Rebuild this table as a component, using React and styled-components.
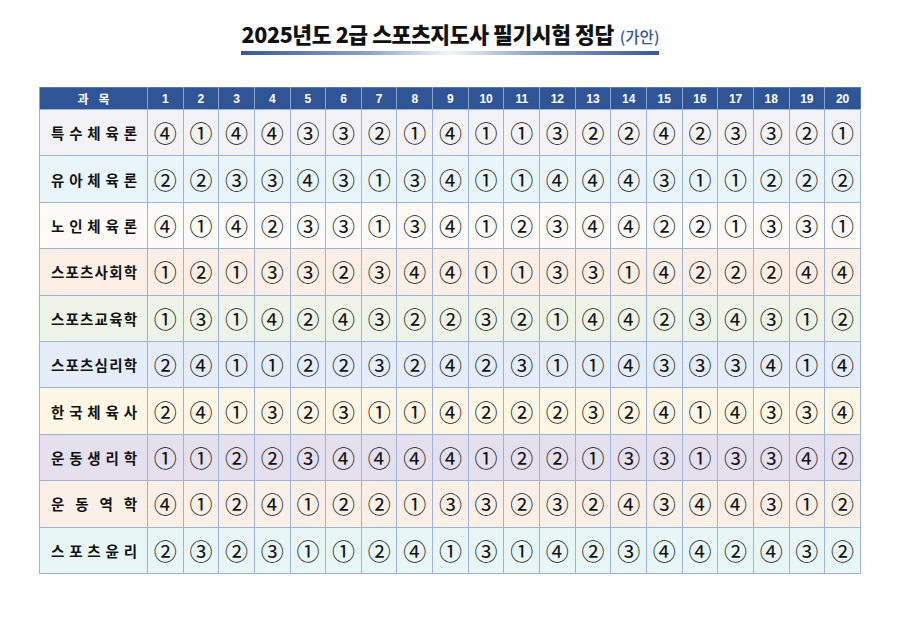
import React from 'react';
import styled, { createGlobalStyle } from 'styled-components';

const GlobalStyle = createGlobalStyle`
  html, body {
    margin: 0;
    padding: 0;
    background: #fff;
  }
  body {
    font-family: "Noto Sans CJK KR", "Noto Sans", sans-serif;
  }
`;

const Page = styled.div`
  width: 900px;
  height: 622px;
  display: flex;
  flex-direction: column;
  align-items: center;
  padding-top: 21px;
  box-sizing: border-box;
`;

const TitleBlock = styled.div`
  display: flex;
  flex-direction: column;
  align-items: stretch;
  margin-bottom: 32px;
`;

const Title = styled.h1`
  margin: 0;
  padding: 0 0 2px 1px;
  font-size: 21.5px;
  font-weight: 800;
  line-height: 26px;
  color: #111;
  letter-spacing: -0.4px;
  white-space: nowrap;
`;

const Draft = styled.span`
  font-size: 15.5px;
  font-weight: 500;
  color: #35559a;
  margin-left: 6px;
  letter-spacing: 0;
`;

const Underline = styled.div`
  height: 4px;
  background: linear-gradient(90deg, #3a5896 0%, #8ea2c6 30%, #f2f5fa 50%, #8ea2c6 70%, #3a5896 100%);
`;

const Table = styled.table`
  border-collapse: collapse;
  table-layout: fixed;
  width: 822px;
  border: 1.5px solid #5577ad;
`;

const HeadCell = styled.th`
  background: #2f5597;
  color: #fff;
  font-size: 12px;
  font-weight: 700;
  height: 21px;
  padding: 0;
  border-left: 1px solid #8aa3cf;
  font-family: "Liberation Sans", "Noto Sans CJK KR", sans-serif;
  letter-spacing: ${(p) => (p.$wide ? '10px' : '0')};
  text-indent: ${(p) => (p.$wide ? '10px' : '0')};
`;

const Row = styled.tr`
  background: ${(p) => p.$bg};
`;

const NameCell = styled.td`
  height: 45.4px;
  padding: 0 10px 0 11px;
  border: 1px solid #9fb3d6;
`;

const Name = styled.div`
  display: flex;
  justify-content: space-between;
  font-size: 14.5px;
  font-weight: 700;
  color: #111;
`;

const AnswerCell = styled.td`
  padding: 0;
  text-align: center;
  border: 1px solid #9fb3d6;
  font-family: "Noto Sans CJK KR", serif;
  font-size: 23px;
  font-weight: 400;
  line-height: 1;
  color: #111;
`;

const COLS = Array.from({ length: 20 }, (_, i) => i + 1);
const SYM = ['', '①', '②', '③', '④'];

const subjects = [
  { name: '특수체육론', bg: '#f3f3f5', a: '41443321411322423321' },
  { name: '유아체육론', bg: '#e9f5f8', a: '22334313411444311222' },
  { name: '노인체육론', bg: '#fcfbf8', a: '41423313412344221331' },
  { name: '스포츠사회학', bg: '#fcefe6', a: '12133234411331422244' },
  { name: '스포츠교육학', bg: '#eef5e8', a: '13142432232144234312' },
  { name: '스포츠심리학', bg: '#e5edf8', a: '24112232423114333414' },
  { name: '한국체육사', bg: '#fef7e6', a: '24132311422232414334' },
  { name: '운동생리학', bg: '#e5e0ee', a: '11223444412213313342' },
  { name: '운동역학', bg: '#faf0e8', a: '41241221332324344312' },
  { name: '스포츠윤리', bg: '#e9f6f6', a: '23231124131423442432' },
];

export default function App() {
  return (
    <>
      <GlobalStyle />
      <Page>
        <TitleBlock>
          <Title>
            2025년도 2급 스포츠지도사 필기시험 정답<Draft>(가안)</Draft>
          </Title>
          <Underline />
        </TitleBlock>
        <Table>
          <colgroup>
            <col style={{ width: '108px' }} />
            {COLS.map((c) => (
              <col key={c} />
            ))}
          </colgroup>
          <thead>
            <tr>
              <HeadCell $wide>과목</HeadCell>
              {COLS.map((c) => (
                <HeadCell key={c}>{c}</HeadCell>
              ))}
            </tr>
          </thead>
          <tbody>
            {subjects.map((s) => (
              <Row key={s.name} $bg={s.bg}>
                <NameCell>
                  <Name>
                    {s.name.split('').map((ch, i) => (
                      <span key={i}>{ch}</span>
                    ))}
                  </Name>
                </NameCell>
                {s.a.split('').map((d, i) => (
                  <AnswerCell key={i}>{SYM[Number(d)]}</AnswerCell>
                ))}
              </Row>
            ))}
          </tbody>
        </Table>
      </Page>
    </>
  );
}
